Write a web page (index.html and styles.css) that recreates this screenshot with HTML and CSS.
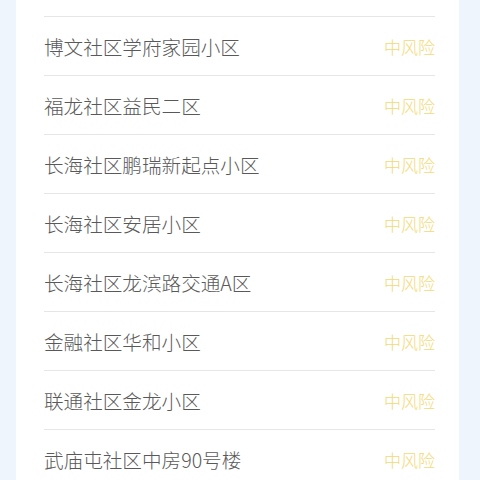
FILE: index.html
```html
<!DOCTYPE html>
<html lang="zh">
<head>
    <meta charset="UTF-8">
    <meta name="viewport" content="width=device-width, initial-scale=1.0">
    <title>风险地区</title>
    <link rel="stylesheet" href="styles.css">
</head>
<body>
    <div class="page">
        <ul class="risk-list">
            <li class="risk-row"></li>
            <li class="risk-row"><span class="area">博文社区学府家园小区</span><span class="level">中风险</span></li>
            <li class="risk-row"><span class="area">福龙社区益民二区</span><span class="level">中风险</span></li>
            <li class="risk-row"><span class="area">长海社区鹏瑞新起点小区</span><span class="level">中风险</span></li>
            <li class="risk-row"><span class="area">长海社区安居小区</span><span class="level">中风险</span></li>
            <li class="risk-row"><span class="area">长海社区龙滨路交通A区</span><span class="level">中风险</span></li>
            <li class="risk-row"><span class="area">金融社区华和小区</span><span class="level">中风险</span></li>
            <li class="risk-row"><span class="area">联通社区金龙小区</span><span class="level">中风险</span></li>
            <li class="risk-row"><span class="area">武庙屯社区中房90号楼</span><span class="level">中风险</span></li>
        </ul>
    </div>
</body>
</html>
```

FILE: styles.css
```css
body {
    margin: 0;
    background-color: #eef5fc;
    font-family: "Noto Sans CJK SC", "Noto Sans", sans-serif;
    overflow: hidden;
}
.page {
    padding-left: 16px;
    width: 443px;
}
.risk-list {
    list-style: none;
    margin: -42px 0 0;
    padding: 0 24px 0 28px;
    background-color: #fff;
}
.risk-row {
    height: 58px;
    border-bottom: 1px solid #e6e6e6;
    display: flex;
    justify-content: space-between;
    align-items: center;
}
.area {
    color: #595959;
    font-size: 19.6px;
    font-weight: 300;
}
.level {
    color: #f3d976;
    font-size: 17px;
    font-weight: 300;
}
```
